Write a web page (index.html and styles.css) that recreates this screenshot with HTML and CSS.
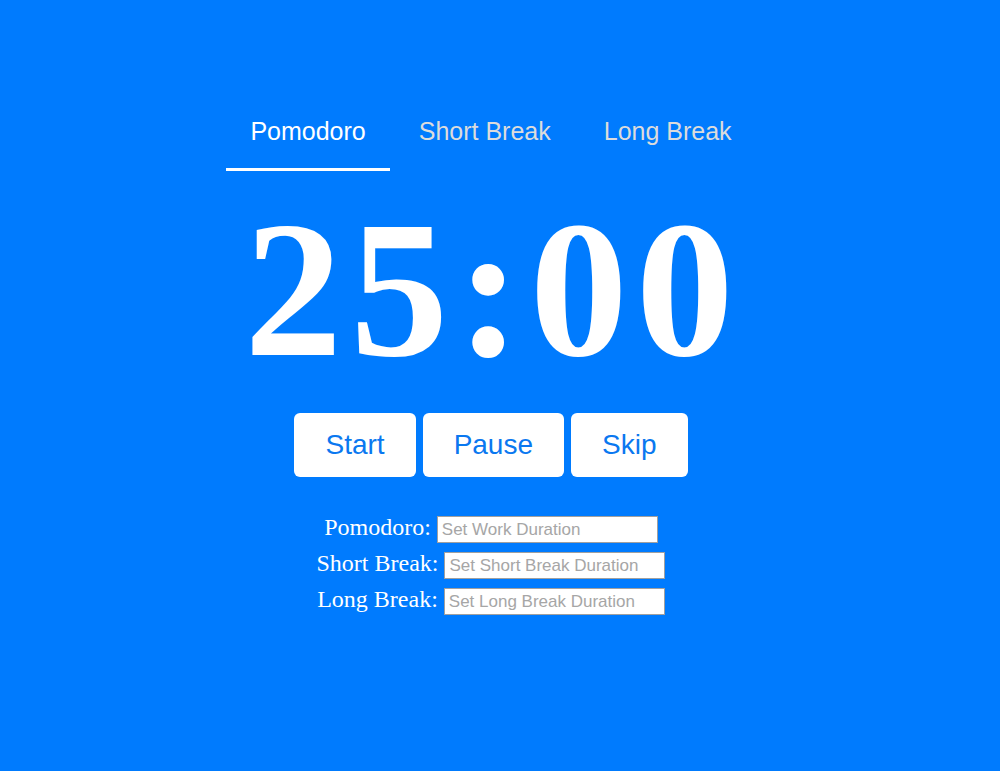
FILE: index.html
```html
<!DOCTYPE html>
<html lang="en">
<head>
<meta charset="utf-8">
<title>Pomodoro Timer</title>
<link rel="stylesheet" href="styles.css">
</head>
<body>
<main class="app">
  <nav class="tabs">
    <a class="tab active">Pomodoro</a>
    <a class="tab">Short Break</a>
    <a class="tab">Long Break</a>
  </nav>
  <div class="timer">25:00</div>
  <div class="controls">
    <button class="btn">Start</button>
    <button class="btn">Pause</button>
    <button class="btn">Skip</button>
  </div>
  <form class="settings">
    <div class="row">
      <label class="label">Pomodoro:</label>
      <input class="field" type="text" placeholder="Set Work Duration">
    </div>
    <div class="row">
      <label class="label">Short Break:</label>
      <input class="field" type="text" placeholder="Set Short Break Duration">
    </div>
    <div class="row">
      <label class="label">Long Break:</label>
      <input class="field" type="text" placeholder="Set Long Break Duration">
    </div>
  </form>
</main>
</body>
</html>
```
FILE: styles.css
```css
html, body {
  margin: 0;
  padding: 0;
  background: #007bfe;
  height: 100%;
}

.app {
  width: 982px;
  display: flex;
  flex-direction: column;
  align-items: center;
  padding-top: 107px;
}

.tabs {
  display: flex;
  gap: 5px;
}

.tab {
  font-family: "Liberation Sans", Arial, sans-serif;
  font-size: 25px;
  line-height: 29px;
  color: #dcdcdc;
  padding: 10px 24px 22px;
  border-bottom: 3px solid transparent;
  cursor: pointer;
}

.tab.active {
  color: #ffffff;
  border-bottom-color: #ffffff;
}

.timer {
  margin-top: 20px;
  padding-left: 4px;
  font-family: "Liberation Serif", "Times New Roman", serif;
  font-weight: bold;
  font-size: 196px;
  line-height: 196px;
  letter-spacing: 8px;
  color: #ffffff;
}

.controls {
  margin-top: 26px;
  display: flex;
  gap: 7px;
}

.btn {
  height: 64px;
  padding: 0 31px;
  border: none;
  border-radius: 6px;
  background: #ffffff;
  color: #0a78f0;
  font-family: "Liberation Sans", Arial, sans-serif;
  font-size: 28px;
  cursor: pointer;
}

.settings {
  margin-top: 37px;
  display: flex;
  flex-direction: column;
  align-items: center;
}

.row {
  height: 36px;
  display: flex;
  align-items: baseline;
  gap: 6px;
}

.label {
  font-family: "Liberation Serif", "Times New Roman", serif;
  font-size: 24px;
  color: #ffffff;
}

.field {
  box-sizing: border-box;
  width: 221px;
  height: 27px;
  padding: 2px 4px 0;
  border: 1px solid #a0a0a0;
  background: #ffffff;
  font-family: "Liberation Sans", Arial, sans-serif;
  font-size: 17px;
  color: #333;
}

.field::placeholder {
  color: #a6a6a6;
}
```
